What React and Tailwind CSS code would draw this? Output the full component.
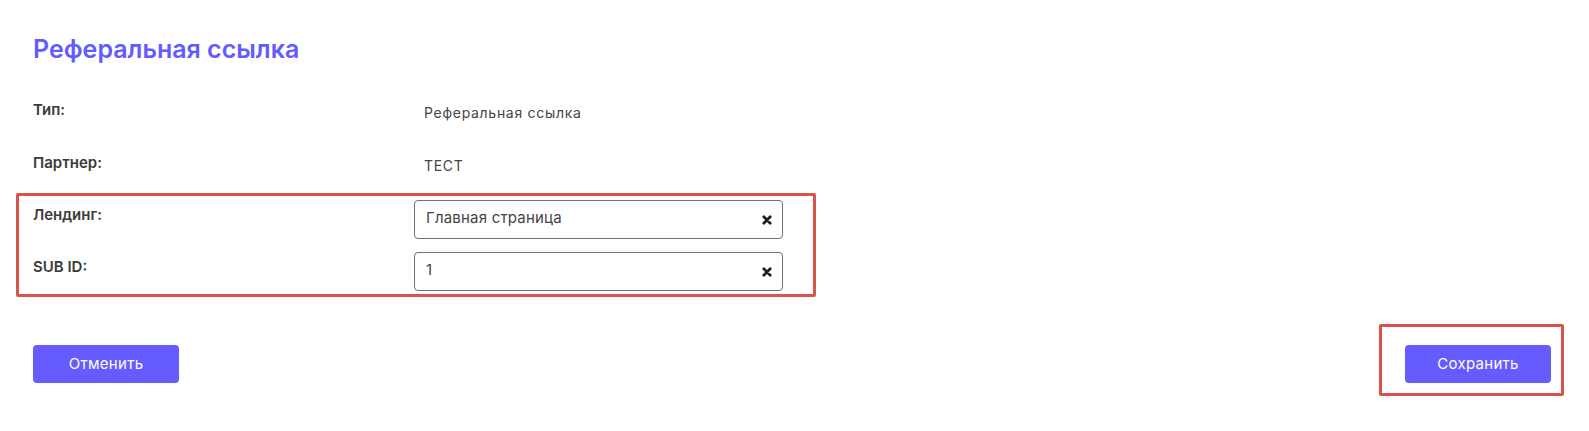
import React from "react";

function ClearIcon() {
  return (
    <svg width="10" height="10" viewBox="0 0 10 10" className="shrink-0">
      <path d="M1.8 1.8 L8.2 8.2 M8.2 1.8 L1.8 8.2" stroke="#1f1f1f" strokeWidth="2.8" strokeLinecap="round" />
    </svg>
  );
}

function Field({ value }) {
  return (
    <div className="flex h-[39px] w-[369px] items-center justify-between rounded-[4px] border border-[#6f6f80] bg-white pl-[11px] pr-[10px]">
      <span className="-mt-[4px] text-[15px] leading-[20px] tracking-[0.2px] text-[#444444]">{value}</span>
      <ClearIcon />
    </div>
  );
}

export default function App() {
  return (
    <div className="relative h-[431px] w-[1589px] overflow-hidden bg-white" style={{ fontFamily: "Inter, 'Noto Sans', sans-serif" }}>
      <div className="pl-[33px] pr-[38px] pt-[33px]">
        <h1 className="text-[25px] font-semibold leading-[32px] text-[#635bff]">Реферальная ссылка</h1>

        <div className="mt-[35px] flex flex-col">
          <div className="flex h-[53px]">
            <div className="w-[381px] text-[15px] font-semibold leading-[20px] text-[#3a3a3a]">Тип:</div>
            <div className="pl-[10px] pt-[3px] text-[14px] leading-[20px] tracking-[0.7px] text-[#454545]">Реферальная ссылка</div>
          </div>
          <div className="flex h-[47px]">
            <div className="w-[381px] text-[15px] font-semibold leading-[20px] text-[#3a3a3a]">Партнер:</div>
            <div className="pl-[10px] pt-[3px] text-[14px] leading-[20px] tracking-[0.7px] text-[#454545]">ТЕСТ</div>
          </div>
          <div className="flex h-[52px]">
            <div className="w-[381px] pt-[5px] text-[15px] font-semibold leading-[20px] text-[#3a3a3a]">Лендинг:</div>
            <Field value="Главная страница" />
          </div>
          <div className="flex h-[39px]">
            <div className="w-[381px] pt-[5px] text-[15px] font-semibold leading-[20px] text-[#3a3a3a]">SUB ID:</div>
            <Field value="1" />
          </div>
        </div>

        <div className="mt-[54px] flex items-center justify-between">
          <button className="flex h-[38px] w-[146px] items-center justify-center rounded-[4px] bg-[#665bff] text-[15px] leading-[20px] tracking-[0.3px] text-white">Отменить</button>
          <button className="flex h-[38px] w-[146px] items-center justify-center rounded-[4px] bg-[#665bff] text-[15px] leading-[20px] tracking-[0.3px] text-white">Сохранить</button>
        </div>
      </div>

      <div className="pointer-events-none absolute left-[16px] top-[193px] h-[104px] w-[800px] rounded-[2px] border-[3px] border-[#d9554b]" />
      <div className="pointer-events-none absolute left-[1379px] top-[324px] h-[72px] w-[185px] rounded-[2px] border-[3px] border-[#d9554b]" />
    </div>
  );
}
